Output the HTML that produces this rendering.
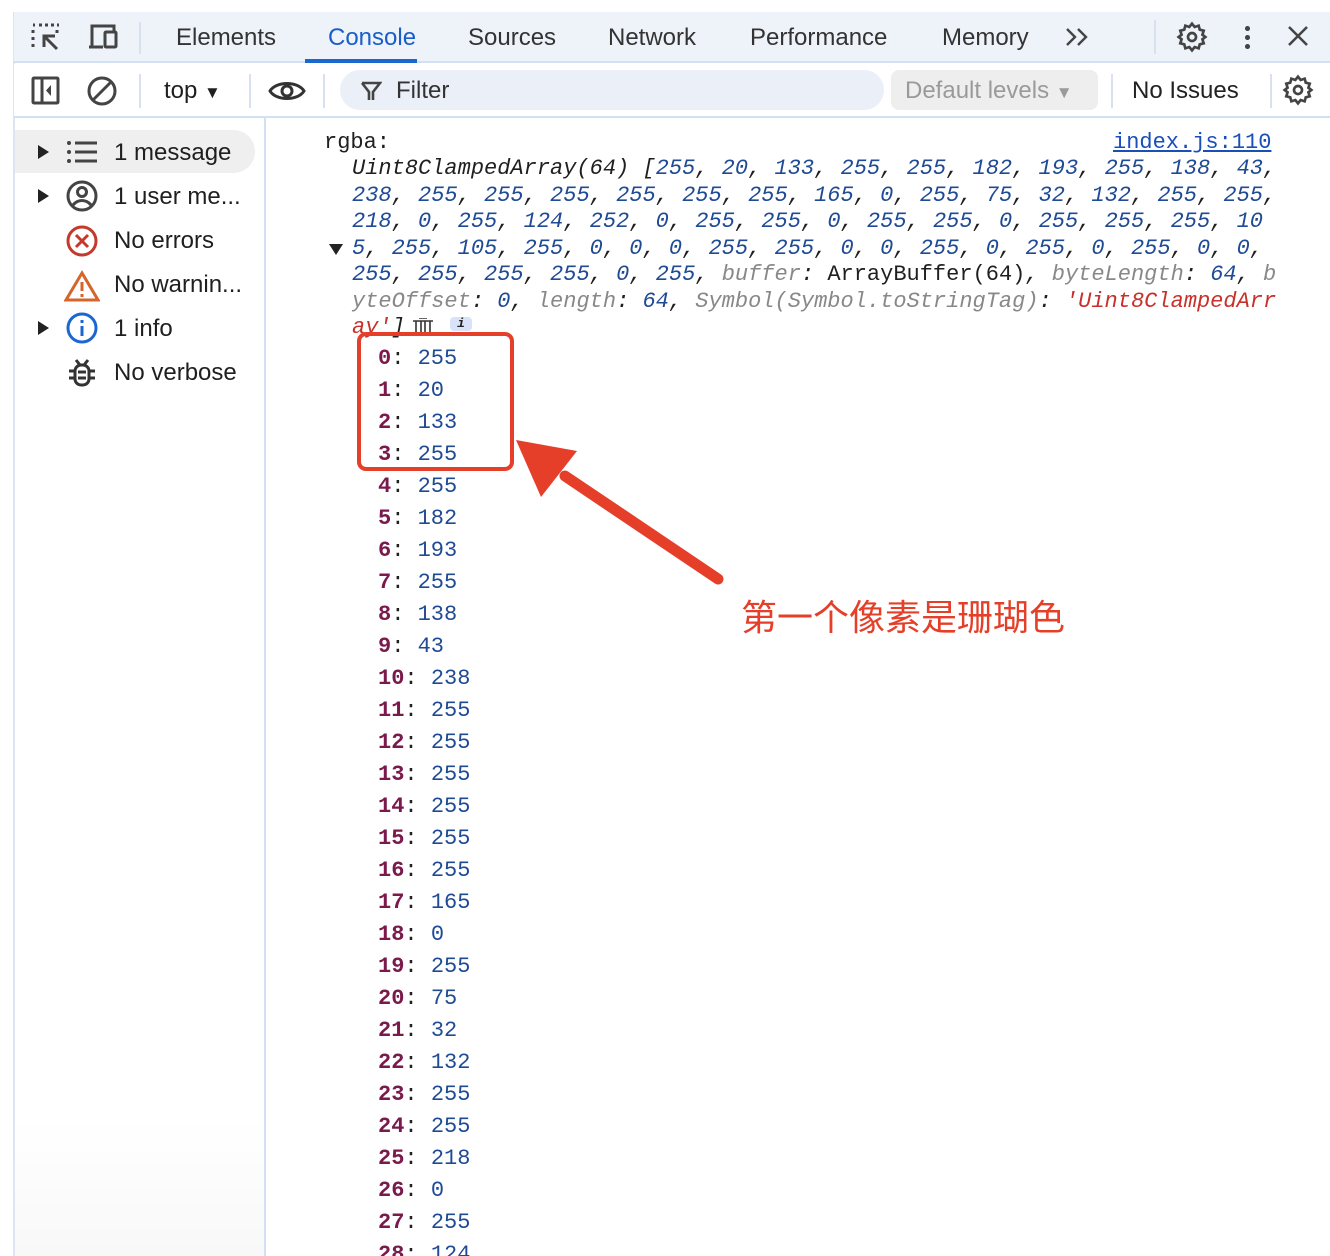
<!DOCTYPE html>
<html style="overflow:hidden"><head><meta charset="utf-8"><style>
*{margin:0;padding:0;box-sizing:border-box}
html,body{width:1330px;height:1256px;overflow:hidden}
body{background:#fff;position:relative;font-family:"Liberation Sans",sans-serif;color:#1f1f1f}
.a{position:absolute}
.tb1{left:14px;top:12px;width:1316px;height:51px;background:#eef2f9;border-bottom:2px solid #d3e0f3}
.tab{position:absolute;top:12px;font-size:24px;color:#333}
.tb2{left:14px;top:64px;width:1316px;height:54px;border-bottom:2px solid #d3e0f3;background:#fff}
.sep{position:absolute;width:2px;background:#d8e1ef}
.mono{font-family:"Liberation Mono",monospace;font-size:22px;white-space:pre}
.n{color:#1f4a94}
.k{color:#7a1a4c;font-weight:bold}
.g{color:#888}
.side{font-size:24px;position:absolute;left:114px}
.tri{position:absolute;width:0;height:0;border-left:11px solid #222;border-top:7px solid transparent;border-bottom:7px solid transparent}
</style></head><body>
<div class="a" style="left:13px;top:12px;width:2px;height:1244px;background:#dde5f2"></div>
<div class="a tb1">
 <svg class="a" style="left:16px;top:9px" width="36" height="32" viewBox="0 0 36 32" fill="none" stroke="#444" stroke-width="3"><path d="M3 4h2M9 4h3M15 4h3M21 4h3M27 4h2M3 9v3M3 16v3M3 23v3M27 9v3"/><path d="M27 28L14 15M14 26V15h11"/></svg>
 <svg class="a" style="left:72px;top:9px" width="36" height="32" viewBox="0 0 36 32" fill="none" stroke="#444" stroke-width="3"><path d="M3 26h14M6 26V5h22v5"/><rect x="19" y="11" width="11" height="15" rx="1"/></svg>
 <div class="sep" style="left:125px;top:10px;height:32px"></div>
 <div class="tab" style="left:162px">Elements</div>
 <div class="tab" style="left:314px;color:#1a5dc8">Console</div>
 <div class="a" style="left:291px;top:47px;width:112px;height:4px;background:#1a67d2"></div>
 <div class="tab" style="left:454px">Sources</div>
 <div class="tab" style="left:594px">Network</div>
 <div class="tab" style="left:736px">Performance</div>
 <div class="tab" style="left:928px">Memory</div>
 <svg class="a" style="left:1050px;top:15px" width="28" height="20" viewBox="0 0 28 20" fill="none" stroke="#444" stroke-width="2.4"><path d="M3 2l8 8-8 8M14 2l8 8-8 8"/></svg>
 <div class="sep" style="left:1140px;top:8px;height:34px"></div>
 <svg class="a" style="left:1162px;top:9px" width="32" height="32" viewBox="0 0 24 24" fill="none" stroke="#444" stroke-width="2"><circle cx="12" cy="12" r="3"/><path d="M12 2l2 2.5 3-1 .8 3 3 .8-1 3L22 12l-2.2 1.7 1 3-3 .8-.8 3-3-1L12 22l-2-2.5-3 1-.8-3-3-.8 1-3L2 12l2.2-1.7-1-3 3-.8.8-3 3 1z"/></svg>
 <div class="a" style="left:1231px;top:12px;width:5px;height:26px;background:radial-gradient(circle,#444 2.4px,transparent 2.6px) 0 0/5px 9px repeat-y"></div>
 <svg class="a" style="left:1272px;top:12px" width="24" height="24" viewBox="0 0 24 24" stroke="#444" stroke-width="2.6"><path d="M3 3l18 18M21 3L3 21"/></svg>
</div>
<div class="a tb2">
 <svg class="a" style="left:17px;top:12px" width="30" height="30" viewBox="0 0 30 30" fill="none" stroke="#444" stroke-width="3"><rect x="2" y="2" width="25" height="25" rx="1"/><path d="M11 2v25"/><path d="M20 9l-5 5.5 5 5.5z" fill="#444" stroke="none"/></svg>
 <svg class="a" style="left:72px;top:11px" width="32" height="32" viewBox="0 0 32 32" fill="none" stroke="#444" stroke-width="3"><circle cx="16" cy="16" r="13"/><path d="M7 25L25 7"/></svg>
 <div class="sep" style="left:125px;top:10px;height:34px"></div>
 <div class="a" style="left:150px;top:13px;font-size:24px">top <span style="font-size:17px">▼</span></div>
 <div class="sep" style="left:235px;top:10px;height:34px"></div>
 <svg class="a" style="left:254px;top:12px" width="38" height="30" viewBox="0 0 38 30" fill="none" stroke="#333" stroke-width="3"><path d="M2 15C8 5 30 5 36 15C30 25 8 25 2 15z"/><circle cx="19" cy="15" r="5"/></svg>
 <div class="sep" style="left:309px;top:10px;height:34px"></div>
 <div class="a" style="left:326px;top:6px;width:544px;height:40px;border-radius:20px;background:#eaeff8"></div>
 <svg class="a" style="left:346px;top:17px" width="22" height="20" viewBox="0 0 22 20" fill="none" stroke="#444" stroke-width="2.6"><path d="M2 2h18l-7 9v8M9 19v-8L2 2"/></svg>
 <div class="a" style="left:382px;top:13px;font-size:24px;color:#333">Filter</div>
 <div class="a" style="left:877px;top:6px;width:207px;height:40px;border-radius:8px;background:#eeeeee"></div>
 <div class="a" style="left:891px;top:13px;font-size:24px;color:#9a9a9a">Default levels <span style="font-size:17px">▼</span></div>
 <div class="sep" style="left:1097px;top:10px;height:34px"></div>
 <div class="a" style="left:1118px;top:13px;font-size:24px;color:#222">No Issues</div>
 <div class="sep" style="left:1256px;top:10px;height:34px"></div>
 <svg class="a" style="left:1268px;top:10px" width="32" height="32" viewBox="0 0 24 24" fill="none" stroke="#444" stroke-width="2"><circle cx="12" cy="12" r="3"/><path d="M12 2l2 2.5 3-1 .8 3 3 .8-1 3L22 12l-2.2 1.7 1 3-3 .8-.8 3-3-1L12 22l-2-2.5-3 1-.8-3-3-.8 1-3L2 12l2.2-1.7-1-3 3-.8.8-3 3 1z"/></svg>
</div>
<div class="a" style="left:15px;top:118px;width:250px;height:1138px;background:linear-gradient(#fff 88%,#f8f8f8)"></div>
<div class="a" style="left:264px;top:118px;width:2px;height:1138px;background:#d3e0f3"></div>
<div class="a" style="left:15px;top:130px;width:240px;height:43px;border-radius:0 22px 22px 0;background:#efefef"></div>
<div class="tri" style="left:38px;top:145px"></div>
<div class="tri" style="left:38px;top:189px"></div>
<div class="tri" style="left:38px;top:321px"></div>
<svg class="a" style="left:66px;top:140px" width="32" height="24" viewBox="0 0 32 24" fill="#444"><circle cx="3" cy="3" r="2"/><circle cx="3" cy="12" r="2"/><circle cx="3" cy="21" r="2"/><rect x="9" y="1.5" width="22" height="3"/><rect x="9" y="10.5" width="22" height="3"/><rect x="9" y="19.5" width="22" height="3"/></svg>
<svg class="a" style="left:66px;top:180px" width="32" height="32" viewBox="0 0 32 32" fill="none" stroke="#444" stroke-width="3"><circle cx="16" cy="16" r="14"/><circle cx="16" cy="12" r="4.5"/><path d="M7 25c5-6 13-6 18 0"/></svg>
<svg class="a" style="left:66px;top:225px" width="32" height="32" viewBox="0 0 32 32" fill="none" stroke="#c5392c" stroke-width="3"><circle cx="16" cy="16" r="14"/><path d="M10 10l12 12M22 10L10 22"/></svg>
<svg class="a" style="left:64px;top:270px" width="36" height="32" viewBox="0 0 36 32" fill="none" stroke="#d5652b" stroke-width="3"><path d="M18 3L2 30h32z"/><path d="M18 12v9M18 24v3"/></svg>
<svg class="a" style="left:66px;top:312px" width="32" height="32" viewBox="0 0 32 32" fill="none" stroke="#1a67d2" stroke-width="3"><circle cx="16" cy="16" r="14"/><path d="M16 14v10M16 8v3"/></svg>
<svg class="a" style="left:68px;top:358px" width="28" height="30" viewBox="0 0 28 30" fill="none" stroke="#333" stroke-width="3"><path d="M8 2l4 5M20 2l-4 5"/><rect x="7" y="7" width="14" height="20" rx="6"/><path d="M1 13h6M1 20h6M21 13h6M21 20h6M10 14h8M10 20h8"/></svg>
<div class="side" style="top:139px">1 message</div>
<div class="side" style="top:183px">1 user me...</div>
<div class="side" style="top:227px">No errors</div>
<div class="side" style="top:271px">No warnin...</div>
<div class="side" style="top:315px">1 info</div>
<div class="side" style="top:359px">No verbose</div>
<div class="a mono" style="left:324px;top:130px;line-height:26.5px">rgba:</div>
<div class="a mono" style="left:1113px;top:130px;line-height:26.5px;color:#1a4fb8;text-decoration:underline">index.js:110</div>
<div class="a mono" style="left:352px;top:156px;line-height:26.5px;font-style:italic">Uint8ClampedArray(64) [<span class="n">255</span>, <span class="n">20</span>, <span class="n">133</span>, <span class="n">255</span>, <span class="n">255</span>, <span class="n">182</span>, <span class="n">193</span>, <span class="n">255</span>, <span class="n">138</span>, <span class="n">43</span>,
<span class="n">238</span>, <span class="n">255</span>, <span class="n">255</span>, <span class="n">255</span>, <span class="n">255</span>, <span class="n">255</span>, <span class="n">255</span>, <span class="n">165</span>, <span class="n">0</span>, <span class="n">255</span>, <span class="n">75</span>, <span class="n">32</span>, <span class="n">132</span>, <span class="n">255</span>, <span class="n">255</span>,
<span class="n">218</span>, <span class="n">0</span>, <span class="n">255</span>, <span class="n">124</span>, <span class="n">252</span>, <span class="n">0</span>, <span class="n">255</span>, <span class="n">255</span>, <span class="n">0</span>, <span class="n">255</span>, <span class="n">255</span>, <span class="n">0</span>, <span class="n">255</span>, <span class="n">255</span>, <span class="n">255</span>, <span class="n">10</span>
<span class="n">5</span>, <span class="n">255</span>, <span class="n">105</span>, <span class="n">255</span>, <span class="n">0</span>, <span class="n">0</span>, <span class="n">0</span>, <span class="n">255</span>, <span class="n">255</span>, <span class="n">0</span>, <span class="n">0</span>, <span class="n">255</span>, <span class="n">0</span>, <span class="n">255</span>, <span class="n">0</span>, <span class="n">255</span>, <span class="n">0</span>, <span class="n">0</span>,
<span class="n">255</span>, <span class="n">255</span>, <span class="n">255</span>, <span class="n">255</span>, <span class="n">0</span>, <span class="n">255</span>, <span class="g">buffer</span>: <span style="font-style:normal">ArrayBuffer(64)</span>, <span class="g">byteLength</span>: <span class="n">64</span>, <span class="g">b</span>
<span class="g">yteOffset</span>: <span class="n">0</span>, <span class="g">length</span>: <span class="n">64</span>, <span class="g">Symbol(Symbol.toStringTag)</span>: <span style="color:#c8312a">'Uint8ClampedArr</span>
<span style="color:#c8312a">ay'</span>]</div>
<div class="a" style="left:329px;top:244px;width:0;height:0;border-top:11px solid #222;border-left:7px solid transparent;border-right:7px solid transparent"></div>
<svg class="a" style="left:412px;top:318px" width="22" height="14" viewBox="0 0 22 14" fill="none" stroke="#333" stroke-width="1.6"><path d="M1 3h20M4 3v11M9 3v11M13 3v11M18 3v11M7 0h8"/></svg>
<div class="a" style="left:450px;top:317px;width:22px;height:14px;border-radius:4px;background:#d8e2f8;font:italic bold 13px 'Liberation Mono',monospace;text-align:center;color:#222;line-height:14px">i</div>
<div class="a mono" style="left:378px;top:343px;line-height:32px"><span class="k">0</span>: <span class="n">255</span>
<span class="k">1</span>: <span class="n">20</span>
<span class="k">2</span>: <span class="n">133</span>
<span class="k">3</span>: <span class="n">255</span>
<span class="k">4</span>: <span class="n">255</span>
<span class="k">5</span>: <span class="n">182</span>
<span class="k">6</span>: <span class="n">193</span>
<span class="k">7</span>: <span class="n">255</span>
<span class="k">8</span>: <span class="n">138</span>
<span class="k">9</span>: <span class="n">43</span>
<span class="k">10</span>: <span class="n">238</span>
<span class="k">11</span>: <span class="n">255</span>
<span class="k">12</span>: <span class="n">255</span>
<span class="k">13</span>: <span class="n">255</span>
<span class="k">14</span>: <span class="n">255</span>
<span class="k">15</span>: <span class="n">255</span>
<span class="k">16</span>: <span class="n">255</span>
<span class="k">17</span>: <span class="n">165</span>
<span class="k">18</span>: <span class="n">0</span>
<span class="k">19</span>: <span class="n">255</span>
<span class="k">20</span>: <span class="n">75</span>
<span class="k">21</span>: <span class="n">32</span>
<span class="k">22</span>: <span class="n">132</span>
<span class="k">23</span>: <span class="n">255</span>
<span class="k">24</span>: <span class="n">255</span>
<span class="k">25</span>: <span class="n">218</span>
<span class="k">26</span>: <span class="n">0</span>
<span class="k">27</span>: <span class="n">255</span>
<span class="k">28</span>: <span class="n">124</span></div>
<div class="a" style="left:357px;top:332px;width:157px;height:139px;border:4px solid #e53f2a;border-radius:9px"></div>
<svg class="a" style="left:0;top:0" width="1330" height="1256" viewBox="0 0 1330 1256"><path d="M718 579L565 476" stroke="#e53f2a" stroke-width="11" stroke-linecap="round"/><path d="M516 440L577 451L541 497z" fill="#e53f2a"/></svg>
<div class="a" style="left:741px;top:589px;font-size:36px;color:#e53f2a;font-family:'Liberation Sans','Noto Sans CJK SC',sans-serif">第一个像素是珊瑚色</div>
</body></html>
